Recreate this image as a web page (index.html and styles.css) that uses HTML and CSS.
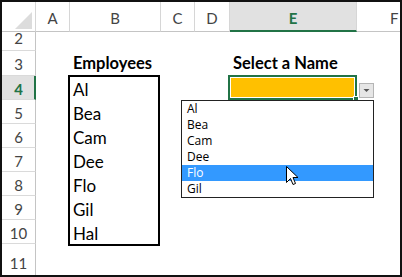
FILE: index.html
```html
<!DOCTYPE html>
<html lang="en">
<head>
  <meta charset="UTF-8">
  <title>Select a Name</title>
  <link rel="stylesheet" href="styles.css">
</head>
<body>
  <div class="window">
    <div class="sheet">
      <div class="corner">
        <svg width="33" height="29" viewBox="0 0 33 29"><polygon points="13,27 30,27 30,10" fill="#dcdcdc"/></svg>
      </div>
      <div class="colhdr">A</div>
      <div class="colhdr">B</div>
      <div class="colhdr">C</div>
      <div class="colhdr">D</div>
      <div class="colhdr active">E</div>
      <div class="colhdr last">F</div>

      <div class="rowhdr r2"><span>2</span></div>
      <div class="rowhdr">3</div>
      <div class="rowhdr active">4</div>
      <div class="rowhdr">5</div>
      <div class="rowhdr">6</div>
      <div class="rowhdr">7</div>
      <div class="rowhdr">8</div>
      <div class="rowhdr">9</div>
      <div class="rowhdr">10</div>
      <div class="rowhdr r11">11</div>

      <div class="title emp">Employees</div>
      <div class="title sel">Select a Name</div>

      <ul class="names">
        <li>Al</li>
        <li>Bea</li>
        <li>Cam</li>
        <li>Dee</li>
        <li>Flo</li>
        <li>Gil</li>
        <li>Hal</li>
      </ul>

      <div class="pick"></div>
      <div class="dd-btn">
        <svg width="13" height="13" viewBox="0 0 13 13"><polygon points="3.5,5 9.5,5 6.5,8" fill="#555"/></svg>
      </div>
    </div>

    <!-- open validation list -->
    <ul class="dd-list">
      <li>Al</li>
      <li>Bea</li>
      <li>Cam</li>
      <li>Dee</li>
      <li class="hl">Flo</li>
      <li>Gil</li>
    </ul>

    <svg class="cursor" width="13" height="20" viewBox="0 0 13 20">
      <path d="M0.5,0.5 L0.5,16.5 L4.5,12.5 L7,18.5 L9.5,17.5 L7,11.5 L12,11.5 Z" fill="#fff" stroke="#000" stroke-width="1" stroke-linejoin="miter"/>
    </svg>
  </div>
</body>
</html>
```

FILE: styles.css
```css
body { margin: 0; background: #fff; }
.window { position: relative; width: 402px; height: 277px; box-sizing: border-box; border: 2px solid #111; overflow: hidden; background: #fff; font-family: Lato, "Liberation Sans", sans-serif; }

.sheet { display: grid; grid-template-columns: 34px 34px 91px 34px 35px 127px 1fr; grid-template-rows: 30px 19px 25px repeat(7, 24px) 38px; height: 273px; overflow: hidden; }

.corner, .colhdr { box-sizing: border-box; border-right: 1px solid #d6d6d6; border-bottom: 1px solid #c4c4c4; }
.corner svg { display: block; }
.colhdr { display: flex; align-items: center; justify-content: center; padding-top: 3px; font-size: 15px; color: #444; }
.colhdr.active { background: #e1e1e1; border-bottom: 2px solid #217346; color: #217346; font-weight: bold; padding-top: 4px; }
.colhdr.last { border-right: 0; justify-content: flex-start; padding-left: 33px; }

.rowhdr { grid-column: 1; box-sizing: border-box; display: flex; align-items: center; justify-content: center; padding-top: 2px; border-right: 1px solid #c4c4c4; border-bottom: 1px solid #dadada; font-size: 15px; color: #444; }
.rowhdr.active { background: #e1e1e1; border-right: 2px solid #217346; color: #217346; font-weight: bold; padding-left: 1px; }
.rowhdr.r2 { align-items: flex-start; overflow: hidden; }
.rowhdr.r2 span { line-height: 19px; margin-top: -5px; }
.rowhdr.r11 { align-items: flex-start; padding-top: 10px; border-bottom: 0; }

.title { grid-row: 3; align-self: end; font-size: 16.5px; font-weight: bold; line-height: 20px; padding: 0 0 3px 3px; white-space: nowrap; color: #000; }
.emp { grid-column: 3; }
.sel { grid-column: 6; padding-left: 3px; }

.names { grid-row: 4 / 11; grid-column: 3; list-style: none; margin: -1px 1px -2px -2px; padding: 0 0 0 3px; border: 2px solid #000; }
.names li { height: 24px; line-height: 24px; padding-top: 1px; box-sizing: border-box; font-size: 17px; color: #000; }

.pick { grid-row: 4; grid-column: 6; position: relative; margin: -1px 0 0 -2px; border: 2px solid #217346; box-shadow: inset 0 0 0 1px #fff; background: #ffc000; }
.pick::after { content: ""; position: absolute; right: -4px; bottom: -4px; width: 4px; height: 4px; background: #217346; border: 1px solid #fff; }

.dd-btn { grid-row: 4; grid-column: 7; align-self: end; width: 15px; height: 15px; margin: 0 0 2px 2px; box-sizing: border-box; border: 1px solid #b5b5b5; background: #e6e6e6; }
.dd-btn svg { display: block; }

.dd-list { position: absolute; left: 179px; top: 98px; width: 193px; margin: 0; padding: 0; list-style: none; box-sizing: border-box; border: 1px solid #222; background: #fff; font-family: "Open Sans", "DejaVu Sans", sans-serif; font-size: 12px; }
.dd-list li { height: 16px; line-height: 16px; padding-left: 5px; color: #000; }
.dd-list li.hl { background: #3399ff; color: #fff; }

.cursor { position: absolute; left: 284px; top: 164px; }
```
